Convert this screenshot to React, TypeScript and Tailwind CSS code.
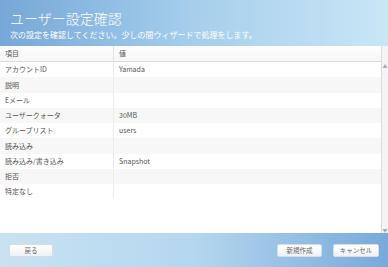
const rows: [string, string][] = [
  ["アカウントID", "Yamada"],
  ["説明", ""],
  ["Eメール", ""],
  ["ユーザークォータ", "30MB"],
  ["グループリスト", "users"],
  ["読み込み", ""],
  ["読み込み/書き込み", "Snapshot"],
  ["拒否", ""],
  ["特定なし", ""],
];

const font = "font-['Noto_Sans_CJK_JP','Liberation_Sans',sans-serif]";

function FooterButton({ label, className }: { label: string; className?: string }) {
  return (
    <button
      type="button"
      className={`h-[13px] rounded-[2px] border border-[#d6dde4] bg-gradient-to-b from-white to-[#eef2f5] text-[6.5px] leading-none text-[#666] ${className ?? ""}`}
    >
      {label}
    </button>
  );
}

export default function App() {
  return (
    <div className={`w-[388px] h-[267px] flex flex-col bg-white overflow-hidden ${font}`}>
      {/* Header */}
      <div className="h-[46px] shrink-0 bg-gradient-to-r from-[#76a7d7] via-[#a6cfec] to-[#c9e6f5] px-[10px] pt-[10px]">
        <div className="text-[14px] leading-[17px] font-light text-white">ユーザー設定確認</div>
        <div className="mt-[3px] text-[8px] leading-[10px] text-white">
          次の設定を確認してください。少しの間ウィザードで処理をします。
        </div>
      </div>

      {/* Table */}
      <div className="flex-1 flex min-h-0">
        <div className="flex-1 flex flex-col">
          <div className="h-[16px] flex items-center border-b border-[#dcdcdc] bg-gradient-to-b from-white to-[#f6f6f6] text-[7px] text-[#555]">
            <div className="w-[114px] pl-[5px] border-r border-[#e2e2e2] h-full flex items-center">項目</div>
            <div className="pl-[5px]">値</div>
          </div>
          {rows.map(([k, v], i) => (
            <div
              key={k}
              className={`h-[15.25px] flex items-center text-[7px] text-[#555] ${i % 2 === 1 ? "bg-[#f7f7f7]" : "bg-white"}`}
            >
              <div className="w-[114px] pl-[5px] border-r border-[#ececec] h-full flex items-center">{k}</div>
              <div className="pl-[5px]">{v}</div>
            </div>
          ))}
        </div>
        {/* Scrollbar */}
        <div className="w-[7px] border-l border-[#dcdcdc] bg-[#f4f4f4] flex flex-col items-center justify-between pt-[17px] pb-[1px] text-[5px] leading-none text-[#aaa]">
          <span>▲</span>
          <span>▼</span>
        </div>
      </div>

      {/* Footer */}
      <div className="h-[34px] shrink-0 bg-gradient-to-r from-[#c9e2f2] via-[#b4d7ef] to-[#78a9da] flex items-center px-[9px] pt-[1px]">
        <FooterButton label="戻る" className="w-[44px]" />
        <div className="flex-1" />
        <FooterButton label="新規作成" className="w-[45px]" />
        <FooterButton label="キャンセル" className="w-[46px] ml-[11px]" />
      </div>
    </div>
  );
}
